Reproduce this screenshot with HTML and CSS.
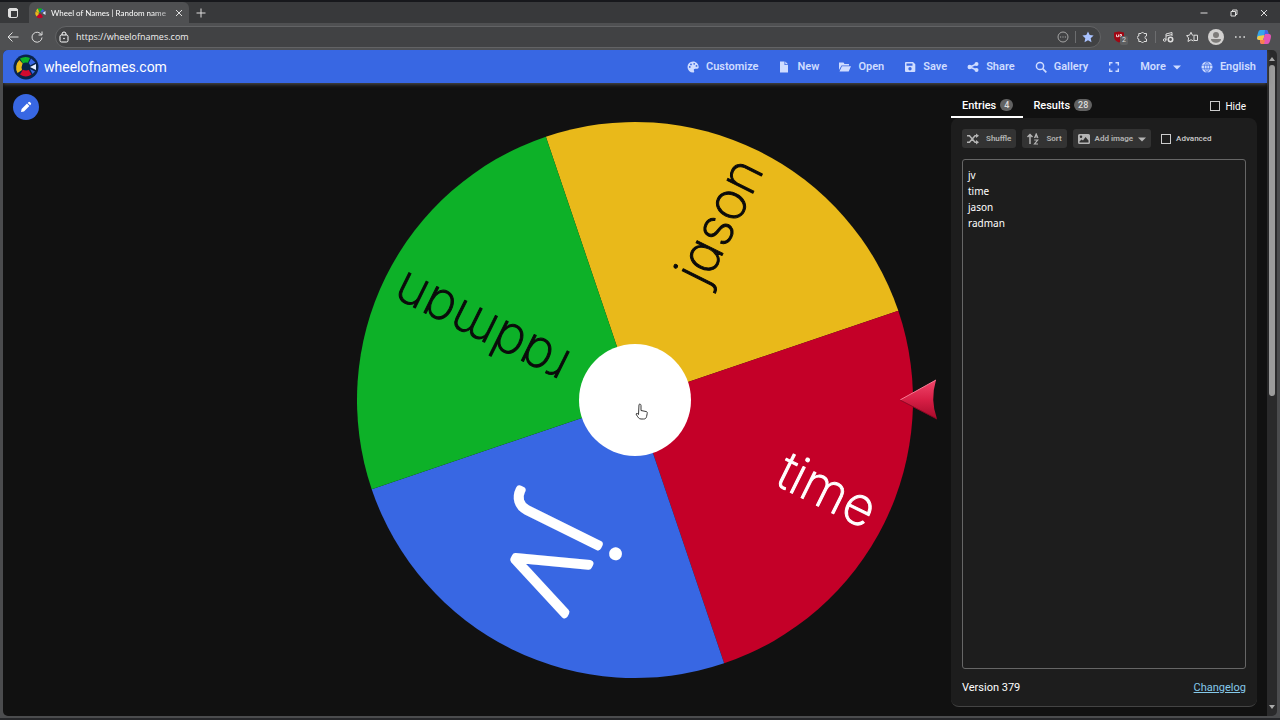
FILE: index.html
```html
<!DOCTYPE html>
<html lang="en">

<head>
    <meta charset="UTF-8">
    <meta name="viewport" content="width=device-width, initial-scale=1.0">
    <title>Wheel of Names | Random name picker</title>
    <link rel="stylesheet" href="styles.css">
</head>

<body>
    <div class="tab-bar">
        <button class="chrome-btn tab-actions" aria-label="Tab actions">
            <svg class="icon" viewBox="0 0 12 12"><rect x="1.5" y="1.5" width="9" height="9" rx="1.5" fill="none" stroke="currentColor"/><path d="M1 2h10v2H1zM2 4h2v6H2z" fill="currentColor"/></svg>
        </button>
        <div class="tab">
            <svg class="icon" viewBox="0 0 24 24">
                <path d="M4 8a9 9 0 0 1 4-5l4 7-4 2z" fill="#e9b91a"/><path d="M8 3a10 10 0 0 1 9 1l-4 6-3 0z" fill="#0db128"/><path d="M3 9l6 3 1 3-5 4a10 10 0 0 1-2-10z" fill="#e9b91a"/><path d="M5 20l5-6h4l4 6a11 11 0 0 1-13 0z" fill="#c40028"/><path d="M17 4l4 4-6 3-2-1z" fill="#3867e3"/><path d="M17 12l6-4v8z" fill="#dbe6ff"/>
            </svg>
            <span class="tab-title">Wheel of Names | Random name</span>
            <button class="chrome-btn" aria-label="Close tab"><svg class="tiny" viewBox="0 0 8 8"><path d="M1 1l6 6M7 1L1 7" fill="none" stroke="currentColor"/></svg></button>
        </div>
        <button class="chrome-btn new-tab" aria-label="New tab"><svg class="icon" viewBox="0 0 12 12"><path d="M6 1.500v9M1.500 6h9" fill="none" stroke="currentColor"/></svg></button>
        <div class="window-controls">
            <button class="chrome-btn" aria-label="Minimize"><svg class="tiny" viewBox="0 0 8 8"><path d="M.5 4h7" stroke="currentColor"/></svg></button>
            <button class="chrome-btn" aria-label="Restore"><svg class="tiny" viewBox="0 0 8 8"><path d="M1 2.500h4.500V7H1zM2.500 2.500V1H7v4.500H5.500" fill="none" stroke="currentColor"/></svg></button>
            <button class="chrome-btn" aria-label="Close"><svg class="tiny" viewBox="0 0 8 8"><path d="M1 1l6 6M7 1L1 7" fill="none" stroke="currentColor"/></svg></button>
        </div>
    </div>

    <div class="toolbar">
        <button class="chrome-btn" aria-label="Back"><svg class="icon" viewBox="0 0 12 12"><path d="M11.500 6H1M5.500 1.500L1 6l4.500 4.500" fill="none" stroke="currentColor"/></svg></button>
        <button class="chrome-btn" aria-label="Reload"><svg class="icon" viewBox="0 0 12 12"><path d="M10.500 4A5 5 0 1 0 11 6.500M11 .5V4H7.500" fill="none" stroke="currentColor"/></svg></button>
        <div class="address">
            <svg class="icon" viewBox="0 0 12 12"><rect x="2" y="4" width="8" height="7" rx="1.500" fill="none" stroke="currentColor"/><path d="M4 4V3a2 2 0 0 1 4 0v1" fill="none" stroke="currentColor"/><circle cx="6" cy="7.500" r=".8" fill="currentColor"/></svg>
            <input class="url" type="text" aria-label="Address" value="https://wheelofnames.com">
            <button class="chrome-btn" aria-label="Page options"><svg class="icon muted" viewBox="0 0 12 12"><circle cx="6" cy="6" r="5" fill="none" stroke="currentColor"/><path d="M3 5.500h1.200v1H3zM5.400 5.500h1.200v1H5.400zM7.800 5.500H9v1H7.800z" fill="currentColor"/></svg></button>
            <span class="separator"></span>
            <button class="chrome-btn favorite" aria-label="Favorite"><svg class="icon" viewBox="0 0 12 12"><path d="M6 .5l1.700 3.600 3.900.5-2.900 2.700.8 3.900L6 9.300l-3.500 1.900.8-3.900L.4 4.600l3.900-.5z" fill="currentColor"/></svg></button>
        </div>
        <div class="extensions">
            <button class="chrome-btn blocker" aria-label="Ad blocker">
                <svg class="icon" viewBox="0 0 12 12"><path d="M6 .5l5 1v4c0 3-2 5-5 6-3-1-5-3-5-6v-4z" fill="#a00713"/><path d="M3.500 3.500v2.200h2V3.500M7 3.500h1.500v2.200H7z" fill="none" stroke="#fff" stroke-width=".8"/></svg>
                <span class="count">2</span>
            </button>
            <button class="chrome-btn" aria-label="Extensions"><svg class="icon" viewBox="0 0 12 12"><path d="M4 2.500a1.600 1.600 0 0 1 3 0h2.500V5a1.500 1.500 0 1 0 0 3v2.500H7a1.600 1.600 0 0 1-3 0H1.800V8A1.500 1.500 0 0 1 1.800 5V2.500z" fill="none" stroke="currentColor"/></svg></button>
            <span class="separator"></span>
            <button class="chrome-btn" aria-label="Media"><svg class="icon" viewBox="0 0 12 12"><path d="M4 9V3l6-1.500V5M4 5l6-1.500" fill="none" stroke="currentColor"/><circle cx="2.700" cy="9" r="1.300" fill="none" stroke="currentColor"/><circle cx="8.500" cy="8.500" r="2.200" fill="none" stroke="currentColor" stroke-width="1.600"/></svg></button>
            <button class="chrome-btn" aria-label="Favorites list"><svg class="icon" viewBox="0 0 12 12"><path d="M7.500 10L5 8.700 2 10.500l.6-3.500L.6 4.600l2.900-.4L5 1.300l1.400 2.900H7.500M8 4.200h3.500v5.300H8z" fill="none" stroke="currentColor"/></svg></button>
            <button class="chrome-btn" aria-label="Profile"><svg class="avatar" viewBox="0 0 16 16"><circle cx="8" cy="8" r="8" fill="#d2d1d0"/><circle cx="8" cy="6" r="3" fill="#7e7c7a"/><path d="M3 10h10c0 5-10 5-10 0z" fill="#7e7c7a"/></svg></button>
            <button class="chrome-btn" aria-label="Settings"><svg class="icon" viewBox="0 0 12 12"><path d="M1 5.300h1.600v1.500H1zM5.200 5.300h1.600v1.500H5.200zM9.400 5.300H11v1.500H9.400z" fill="currentColor"/></svg></button>
            <button class="chrome-btn" aria-label="Copilot">
                <svg class="avatar" viewBox="0 0 16 16">
                    <path d="M5 1h5c2 0 2 2 2.500 4H9L7 11H3C0 11 1 7 2 4s1.500-3 3-3z" fill="#35a5ec"/><path d="M2 7l-1 2c0 2 2 2 3 2h3l2-5z" fill="#f2c94a"/><path d="M9 5h4c3 0 2 4 1 7s-2 3-4 3H6c-2 0-2-2-2-4h3z" fill="#e356b5"/><path d="M4 11h5l-1 4H6c-2 0-2-2-2-4z" fill="#f7814e"/><path d="M9 1h1c2 0 2 2 2.500 4H9l-1 3z" fill="#4464e8"/>
                </svg>
            </button>
        </div>
    </div>

    <div class="viewport">
        <div class="page">
            <header class="header">
                <svg class="logo" viewBox="0 0 26 26">
                    <circle cx="13" cy="13" r="12.500" fill="#0a2448"/>
                    <path d="M7 4.500a10.500 10.500 0 0 1 10-.5l-2.500 5.500H10z" fill="#0db128"/><path d="M6.500 6l3.500 4-1.500 3 .5 3-4.500 3A10.500 10.500 0 0 1 6.500 6z" fill="#e9b91a"/><path d="M7 20.500L10 15.500h5.500l3 5a10.500 10.500 0 0 1-11.500 0z" fill="#d20a2e"/><path d="M18 4.500l4.500 4-5.500 3-1.500-2z" fill="#3867e3"/><path d="M17 15l5 2.500-2.500 2.500z" fill="#3867e3"/><circle cx="13" cy="12.500" r="4" fill="#0a2448"/><path d="M17 13l6-3v6z" fill="#e8f0ff"/>
                </svg>
                <span class="brand">wheelofnames.com</span>
                <nav class="menu">
                    <button class="menu-btn"><svg class="icon" viewBox="0 0 12 12"><path fill-rule="evenodd" d="M6 .5a5.500 5.500 0 1 0 0 11c1.200 0 1.500-1 1-1.800-.6-1.200.2-2 1.200-2h2c1 0 1.500-.7 1.500-1.700C11.700 3 9.200.5 6 .5zM2.800 5a.9.9 0 1 0 0 1.800.9.9 0 0 0 0-1.800zM4 2.500a.9.9 0 1 0 0 1.800.9.900 0 0 0 0-1.800zM7.200 1.900a.9.900 0 1 0 0 1.800.9.900 0 0 0 0-1.800zM9.500 4a.9.900 0 1 0 0 1.800.9.900 0 0 0 0-1.800z" fill="currentColor"/></svg>Customize</button>
                    <button class="menu-btn"><svg class="icon" viewBox="0 0 12 12"><path d="M1 .5h4.500V4H9v7.500H1zM6.300.5L9 3.200H6.300z" fill="currentColor"/></svg>New</button>
                    <button class="menu-btn"><svg class="icon" viewBox="0 0 12 12"><path d="M0 1.500h4.500l1 1.500H10v1.500H2.500L0 9zM2.900 5.300H12L9.700 10.500H.5z" fill="currentColor"/></svg>Open</button>
                    <button class="menu-btn"><svg class="icon" viewBox="0 0 12 12"><path fill-rule="evenodd" d="M2 1h7l2.300 2.300V10a1 1 0 0 1-1 1H2a1 1 0 0 1-1-1V2a1 1 0 0 1 1-1zM2.500 2.500v2.200h6V2.500zM6 6a1.700 1.700 0 1 0 0 3.400A1.700 1.700 0 0 0 6 6z" fill="currentColor"/></svg>Save</button>
                    <button class="menu-btn"><svg class="icon" viewBox="0 0 12 12"><path d="M9.500 3L3 6l6.500 3" fill="none" stroke="currentColor" stroke-width="1.500"/><circle cx="2.700" cy="6" r="2.200" fill="currentColor"/><circle cx="9.500" cy="3" r="2" fill="currentColor"/><circle cx="9.500" cy="9" r="2" fill="currentColor"/></svg>Share</button>
                    <button class="menu-btn"><svg class="icon" viewBox="0 0 12 12"><circle cx="5" cy="5" r="3.600" fill="none" stroke="currentColor" stroke-width="1.500"/><path d="M7.700 7.700l3.600 3.600" stroke="currentColor" stroke-width="1.700"/></svg>Gallery</button>
                    <button class="menu-btn" aria-label="Fullscreen"><svg class="icon" viewBox="0 0 12 12"><path d="M1.700 4.500V1.700h2.800M7.500 1.700h2.800v2.800M10.300 7.500v2.800H7.500M4.500 10.300H1.700V7.500" fill="none" stroke="currentColor" stroke-width="1.400"/></svg></button>
                    <button class="menu-btn">More<svg class="caret" viewBox="0 0 8 8"><path d="M0 2.500h8L4 6.500z" fill="currentColor"/></svg></button>
                    <button class="menu-btn"><svg class="icon" viewBox="0 0 12 12"><circle cx="6" cy="6" r="5.500" fill="currentColor"/><path d="M6 .5v11M.5 4.200h11M.5 7.800h11M6 .5c-3.500 3-3.500 8 0 11M6 .5c3.500 3 3.500 8 0 11" fill="none" stroke="#3867e3" stroke-width=".7"/></svg>English</button>
                </nav>
            </header>

            <main class="content">
                <div class="side">
                    <button class="edit-btn" aria-label="Edit title"><svg class="icon" viewBox="0 0 12 12"><path d="M1 11l.6-3L7 2.600 9.400 5 4 10.400zM7.700 1.900l.7-.7a1.200 1.200 0 0 1 1.700 0l.7.7a1.200 1.200 0 0 1 0 1.700l-.7.7z" fill="currentColor"/></svg></button>
                </div>

                <div class="wheel-area">
                    <svg class="wheel" viewBox="-316 -316 632 632" role="img" aria-label="Wheel">
                        <defs>
                            <linearGradient id="pointer" x1="0" y1="0" x2="0" y2="1">
                                <stop offset="0" stop-color="#f0476b"/>
                                <stop offset="0.500" stop-color="#d81f46"/>
                                <stop offset="1" stop-color="#a80a2a"/>
                            </linearGradient>
                        </defs>
                        <g transform="rotate(-18.700)">
                            <path class="yellow" d="M0 0V-278A278 278 0 0 1 278 0z"/>
                            <path class="red" d="M0 0V-278A278 278 0 0 1 278 0z" transform="rotate(90)"/>
                            <path class="blue" d="M0 0V-278A278 278 0 0 1 278 0z" transform="rotate(180)"/>
                            <path class="green" d="M0 0V-278A278 278 0 0 1 278 0z" transform="rotate(270)"/>
                            <text class="name" x="264" y="14" transform="rotate(-45)">jason</text>
                            <text class="name light" x="264" y="14" transform="rotate(45)">time</text>
                            <text class="name light large" x="230" y="38" transform="rotate(135)">jv</text>
                            <text class="name" x="264" y="14" transform="rotate(225)">radman</text>
                        </g>
                        <circle r="56" fill="#fff"/>
                        <path d="M265 0L301 -20Q295 0 302 19z" fill="url(#pointer)"/>
                        <path d="M265 0L301 -20" stroke="#f77a93" fill="none"/>
                        <path d="M265 0L302 19" stroke="#8d0824" fill="none"/>
                        <!-- hand cursor -->
                        <path d="M4 4.500c1-1 2 0 2 1v5l5 1c1 0 1.500 1 1.200 2l-.6 3c-.5 2-1.500 2.500-3 2.500H6c-2 0-3-1.500-5-5 .5-1 1.500-.7 2.500.500z" fill="#fff" stroke="#222" stroke-width=".9"/>
                    </svg>
                </div>

                <aside class="panel">
                    <div class="tabs">
                        <button class="tab-btn active">Entries <span class="badge">4</span></button>
                        <button class="tab-btn">Results <span class="badge">28</span></button>
                        <label class="check hide"><input type="checkbox">Hide</label>
                    </div>
                    <div class="card">
                        <div class="tools">
                            <button class="tool-btn"><svg class="icon" viewBox="0 0 12 12"><path d="M0 2.800h2.500L8 9.200h2M0 9.200h2.500L8 2.800h2" fill="none" stroke="currentColor" stroke-width="1.500"/><path d="M9 .5l3 2.300L9 5zM9 7l3 2.300-3 2.200z" fill="currentColor"/></svg><span>Shuffle</span></button>
                            <button class="tool-btn"><svg class="icon" viewBox="0 0 12 12"><path d="M3 11V2M.5 4L3 1.500 5.500 4" fill="none" stroke="currentColor" stroke-width="1.500"/><path d="M7.500 5l1.700-4 1.700 4M8 4h2.500M7.200 7h3.500l-3.200 4H11" fill="none" stroke="currentColor" stroke-width="1.200"/></svg><span>Sort</span></button>
                            <button class="tool-btn image-btn"><svg class="icon" viewBox="0 0 12 12"><path fill-rule="evenodd" d="M1.500 1h9A1.500 1.500 0 0 1 12 2.500v7a1.500 1.500 0 0 1-1.500 1.500h-9A1.500 1.500 0 0 1 0 9.500v-7A1.500 1.500 0 0 1 1.500 1zM3 2.500A1.200 1.200 0 1 0 3 5a1.200 1.200 0 0 0 0-2.500zM1.500 9.500h9V7.500L7.500 4 5 7.500 3.500 6.500 1.500 8.500z" fill="currentColor"/></svg>Add image<svg class="caret" viewBox="0 0 8 8"><path d="M0 2.500h8L4 6.500z" fill="currentColor"/></svg></button>
                            <label class="check advanced"><input type="checkbox">Advanced</label>
                        </div>
                        <textarea class="entries" aria-label="Entries" spellcheck="false">jv
time
jason
radman</textarea>
                        <div class="footer">
                            <span>Version 379</span>
                            <a href="#changelog">Changelog</a>
                        </div>
                    </div>
                </aside>
            </main>
        </div>
        <div class="scrollbar">
            <svg class="caret" viewBox="0 0 8 8"><path d="M1 6h6L4 2z" fill="currentColor"/></svg>
            <div class="track"><div class="thumb"></div></div>
            <svg class="caret" viewBox="0 0 8 8"><path d="M1 2h6L4 6z" fill="currentColor"/></svg>
        </div>
    </div>
</body>

</html>
```
FILE: styles.css
```css
* {
    box-sizing: border-box;
}

body {
    margin: 0;
    height: 100vh;
    display: flex;
    flex-direction: column;
    font-family: Roboto, sans-serif;
    font-size: 12px;
    background-color: #4b4c4e;
    color: white;
    border-top: 2px solid #17181c;
    border-bottom: 2px solid #26272a;
    overflow: hidden;
}

button {
    border: none;
    padding: 0;
    background: none;
    color: inherit;
    font-family: inherit;
}

svg {
    display: block;
    flex: none;
}

.icon {
    width: 12px;
    height: 12px;
}

.tiny,
.caret {
    width: 8px;
    height: 8px;
}

.avatar {
    width: 16px;
    height: 16px;
    margin: 0 -2px;
}

.chrome-btn {
    color: #dedede;
    flex: none;
}

/* browser window */

.tab-bar {
    display: flex;
    align-items: center;
    height: 21px;
    padding-right: 12px;
    background-color: #38393b;
}

.tab-actions {
    margin: 0 15px 0 7px;
}

.tab {
    display: flex;
    align-items: center;
    gap: 5px;
    width: 160px;
    height: 21px;
    margin-left: -5px;
    padding: 0 6px 0 5px;
    border-radius: 6px 6px 0 0;
    background-color: #4f5052;
}

.tab-title {
    flex: 1;
    white-space: nowrap;
    font-family: Lato, sans-serif;
    font-size: 8px;
    -webkit-mask-image: linear-gradient(to right, black 85%, #0006);
    mask-image: linear-gradient(to right, black 85%, #0006);
}

.new-tab {
    margin-left: 6px;
}

.window-controls {
    display: flex;
    gap: 22px;
    margin-left: auto;
}

.toolbar {
    display: flex;
    align-items: center;
    gap: 12px;
    height: 27px;
    padding: 0 10px 0 7px;
    background-color: #4f5052;
}

.address {
    display: flex;
    flex: 1;
    align-items: center;
    gap: 6px;
    height: 22px;
    padding: 0 6px 0 2px;
    border: 1px solid #626365;
    border-radius: 11px;
    background-color: #414244;
}

.url {
    flex: 1;
    border: none;
    padding: 0;
    background: none;
    color: #f0f0f0;
    outline: none;
    font-family: "Open Sans", sans-serif;
    font-size: 9px;
}

.muted {
    color: #a5a5a5;
}

.favorite {
    color: #a9c2ff;
}

.separator {
    width: 1px;
    height: 12px;
    background-color: #6c6d6f;
}

.extensions {
    display: flex;
    align-items: center;
    gap: 12px;
}

.extensions .separator {
    margin: 0 -6px;
}

.blocker {
    position: relative;
}

.count {
    position: absolute;
    left: 7px;
    top: 5px;
    padding: 0 2px;
    border-radius: 2px;
    background-color: #5d5f61;
    font-size: 7px;
    line-height: 9px;
}

/* page */

.viewport {
    flex: 1;
    display: flex;
    min-height: 0;
    margin: 0 3px 2px;
    border-radius: 5px;
    overflow: hidden;
}

.page {
    flex: 1;
    display: flex;
    flex-direction: column;
    background-color: #111;
}

.header {
    display: flex;
    align-items: center;
    height: 33px;
    padding: 0 9px 0 10px;
    background-color: #3867e3;
    box-shadow: 0 1px 4px #555;
    z-index: 1;
}

.logo {
    width: 26px;
    height: 26px;
}

.brand {
    margin-left: 5px;
    font-size: 14px;
}

.menu {
    display: flex;
    gap: 20px;
    margin: 0 2px 0 auto;
}

.menu-btn {
    display: flex;
    align-items: center;
    gap: 7px;
    color: #cfdcff;
    font-size: 11px;
    font-weight: 600;
}

.content {
    flex: 1;
    display: grid;
    grid-template-columns: 1fr 2fr 1fr;
    min-height: 0;
}

.side {
    padding: 11px 10px;
}

.edit-btn {
    display: grid;
    place-items: center;
    width: 26px;
    height: 26px;
    border-radius: 50%;
    background-color: #3867e3;
}

.wheel-area {
    display: flex;
    align-items: center;
    min-height: 0;
}

.wheel {
    width: 100%;
    max-height: 100%;
}

.yellow {
    fill: #e9b91a;
}

.red {
    fill: #c40028;
}

.blue {
    fill: #3867e3;
}

.green {
    fill: #0db128;
}

.name {
    font-family: Inter, sans-serif;
    font-size: 53px;
    font-weight: 200;
    font-feature-settings: "cv11";
    text-anchor: end;
    fill: #0b0b0b;
    stroke: #0b0b0b;
    stroke-width: 1px;
    stroke-linejoin: round;
}

.light {
    fill: white;
    stroke: white;
}

.large {
    font-size: 128px;
    font-weight: 100;
    stroke-width: 7px;
}

/* entries panel */

.panel {
    display: flex;
    flex-direction: column;
    padding: 11px 10px 9px 0;
}

.tabs {
    display: flex;
    height: 24px;
    padding-right: 11px;
}

.tab-btn {
    display: flex;
    align-items: center;
    gap: 4px;
    padding: 0 10px;
    border-bottom: 2px solid transparent;
    font-size: 11px;
    font-weight: 500;
}

.tab-btn.active {
    padding-left: 11px;
    border-color: white;
}

.badge {
    padding: 0 4px;
    border-radius: 6px;
    background-color: #626262;
    color: #ddd;
    font-size: 9px;
    line-height: 12px;
}

.check {
    display: flex;
    align-items: center;
    gap: 5px;
}

.check input {
    appearance: none;
    width: 10px;
    height: 10px;
    margin: 0;
    border: 1px solid #ccc;
}

.hide {
    margin-left: auto;
    font-size: 10px;
}

.card {
    flex: 1;
    display: flex;
    flex-direction: column;
    min-height: 0;
    padding: 11px 11px 10px;
    border-bottom: 1px solid #444;
    border-radius: 8px;
    background-color: #1d1d1d;
}

.tools {
    display: flex;
    gap: 6px;
    height: 19px;
}

.tool-btn {
    display: flex;
    align-items: center;
    gap: 7px;
    padding: 0 5px;
    border-radius: 3px;
    background-color: #333;
    color: #b5b5b5;
    font-size: 8px;
    font-weight: 600;
}

.image-btn {
    gap: 5px;
}

.advanced {
    margin-left: 4px;
    color: #ccc;
    font-size: 8px;
    font-weight: 500;
}

.entries {
    flex: 1;
    margin: 11px 0;
    padding: 7px 5px;
    border: 1px solid #666;
    border-radius: 3px;
    background: none;
    color: white;
    outline: none;
    resize: none;
    font-family: "Noto Sans", sans-serif;
    font-size: 10px;
    line-height: 16px;
}

.footer {
    display: flex;
    justify-content: space-between;
    font-size: 11px;
    line-height: 16px;
}

.footer a {
    color: #85c9ea;
}

.scrollbar {
    display: flex;
    flex-direction: column;
    align-items: center;
    width: 10px;
    padding: 5px 0;
    background-color: #2a2a2b;
    color: #aaa;
}

.track {
    flex: 1;
    padding: 2px 0;
}

.thumb {
    width: 6px;
    height: 52%;
    border-radius: 3px;
    background-color: #9b9b9b;
}
```
